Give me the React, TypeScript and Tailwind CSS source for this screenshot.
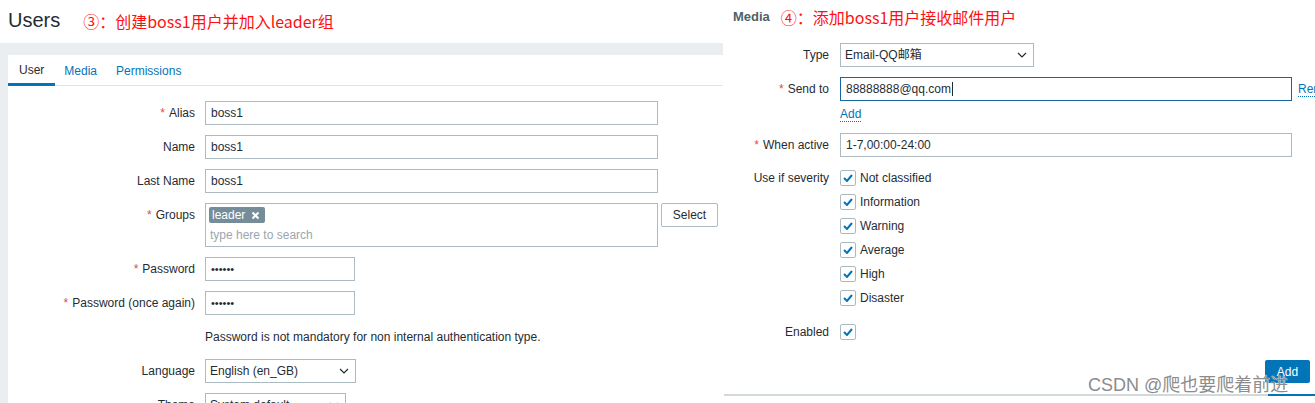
import React from "react";

const Chevron = () => (
  <svg width="10" height="6" viewBox="0 0 10 6" fill="none" className="shrink-0">
    <path d="M1 1l4 4 4-4" stroke="#1f2c33" strokeWidth="1.2" />
  </svg>
);

const Check = () => (
  <span className="w-[16px] h-[16px] border border-[#acbbc2] rounded-[2px] bg-white flex items-center justify-center shrink-0">
    <svg width="10" height="8" viewBox="0 0 10 8" fill="none">
      <path d="M1 4l3 3 5-6" stroke="#0275b8" strokeWidth="2" />
    </svg>
  </span>
);

const Req = () => <span className="text-[#d64e4e] mr-[4px]">*</span>;

function LRow({ label, req, children }: { label: string; req?: boolean; children: React.ReactNode }) {
  return (
    <div className="flex">
      <div className="w-[197px] text-right leading-[24px] pr-[10px] shrink-0">
        {req && <Req />}
        {label}
      </div>
      {children}
    </div>
  );
}

const Input = ({ value, w }: { value: string; w: string }) => (
  <div className={`${w} h-[24px] border border-[#acbbc2] pl-[5px] leading-[22px] bg-white`}>{value}</div>
);

export default function App() {
  const sev = ["Not classified", "Information", "Warning", "Average", "High", "Disaster"];
  return (
    <div className="relative flex w-[1315px] h-[403px] overflow-hidden bg-white text-[12px] text-[#1f2c33] font-['Liberation_Sans','Noto_Sans_CJK_SC',sans-serif]">
      {/* LEFT */}
      <div className="w-[723px] shrink-0 flex flex-col">
        <div className="h-[43px] flex items-center pl-[8px] shrink-0">
          <span className="text-[20px] leading-none pb-[4px]">Users</span>
          <span className="ml-[23px] text-[16px] text-[#ff1010] font-['Noto_Sans_CJK_SC',sans-serif] pb-[2px]">
            ③：创建boss1用户并加入leader组
          </span>
        </div>
        <div className="flex-1 bg-[#ebeef0] pl-[8px] pt-[12px]">
          <div className="bg-white h-full">
            <div className="flex h-[31px] border-b border-[#dfe4e7]">
              <div className="h-[31px] -mb-px px-[11px] flex items-center pt-[1px] border-b-[3px] border-[#0275b8]">User</div>
              <div className="h-[31px] px-[9px] flex items-center text-[#0275b8]">Media</div>
              <div className="h-[31px] px-[10px] flex items-center text-[#0275b8]">Permissions</div>
            </div>
            <div className="pt-[15px] flex flex-col gap-[10px]">
              <LRow label="Alias" req>
                <Input value="boss1" w="w-[453px]" />
              </LRow>
              <LRow label="Name">
                <Input value="boss1" w="w-[453px]" />
              </LRow>
              <LRow label="Last Name">
                <Input value="boss1" w="w-[453px]" />
              </LRow>
              <LRow label="Groups" req>
                <div className="w-[453px] h-[44px] border border-[#acbbc2] pl-[3px] pt-[2px]">
                  <span className="inline-flex items-center h-[16px] bg-[#768d99] text-white rounded-[2px] pl-[3px] pr-[5px] leading-[16px]">
                    leader
                    <svg width="9" height="9" viewBox="0 0 9 9" className="ml-[6px]">
                      <path d="M1.5 1.5l6 6M7.5 1.5l-6 6" stroke="#fff" strokeWidth="2" />
                    </svg>
                  </span>
                  <div className="text-[#9aa7ae] pl-[1px] mt-[4px] leading-[14px]">type here to search</div>
                </div>
                <div className="ml-[3px] w-[57px] h-[24px] border border-[#acbbc2] rounded-[2px] flex items-center justify-center">
                  Select
                </div>
              </LRow>
              <LRow label="Password" req>
                <div className="w-[150px] h-[24px] border border-[#acbbc2] pl-[5px] leading-[22px] text-[11px]">••••••</div>
              </LRow>
              <LRow label="Password (once again)" req>
                <div className="w-[150px] h-[24px] border border-[#acbbc2] pl-[5px] leading-[22px] text-[11px]">••••••</div>
              </LRow>
              <LRow label="">
                <div className="leading-[24px]">Password is not mandatory for non internal authentication type.</div>
              </LRow>
              <LRow label="Language">
                <div className="w-[151px] h-[24px] border border-[#acbbc2] pl-[4px] pr-[6px] flex items-center justify-between">
                  <span>English (en_GB)</span>
                  <Chevron />
                </div>
              </LRow>
              <LRow label="Theme">
                <div className="w-[141px] h-[24px] border border-[#acbbc2] pl-[4px] pr-[6px] flex items-center justify-between">
                  <span>System default</span>
                  <Chevron />
                </div>
              </LRow>
            </div>
          </div>
        </div>
      </div>

      {/* RIGHT */}
      <div className="flex-1 flex flex-col pl-[10px] overflow-hidden">
        <div className="h-[33px] flex items-center shrink-0">
          <span className="text-[13px] font-bold text-[#4f5f6b]">Media</span>
          <span className="ml-[11px] text-[16px] text-[#ff1010] font-['Noto_Sans_CJK_SC',sans-serif]">
            ④：添加boss1用户接收邮件用户
          </span>
        </div>
        <div className="mt-[10px] flex flex-col">
          <div className="flex">
            <div className="w-[96px] text-right leading-[24px] shrink-0">Type</div>
            <div className="ml-[11px] w-[194px] h-[24px] border border-[#acbbc2] pl-[4px] pr-[6px] flex items-center justify-between">
              <span>Email-QQ邮箱</span>
              <Chevron />
            </div>
          </div>
          <div className="flex mt-[10px]">
            <div className="w-[96px] text-right leading-[24px] shrink-0">
              <Req />
              Send to
            </div>
            <div className="ml-[11px] flex flex-col">
              <div className="flex items-center">
                <div className="w-[452px] h-[24px] border border-[#1566a3] pl-[5px] flex items-center shrink-0">
                  88888888@qq.com<span className="w-px h-[14px] bg-[#1f2c33] ml-[1px]" />
                </div>
                <span className="ml-[6px] text-[#0275b8] border-b border-dotted border-[#0275b8] leading-[14px] whitespace-nowrap">Remove</span>
              </div>
              <div className="mt-[4px] h-[18px]">
                <span className="text-[#0275b8] border-b border-dotted border-[#0275b8] leading-[14px] inline-block">Add</span>
              </div>
            </div>
          </div>
          <div className="flex mt-[10px]">
            <div className="w-[96px] text-right leading-[24px] shrink-0">
              <Req />
              When active
            </div>
            <div className="ml-[11px] w-[452px] h-[24px] border border-[#acbbc2] pl-[5px] leading-[22px] shrink-0">1-7,00:00-24:00</div>
          </div>
          <div className="flex mt-[9px]">
            <div className="w-[96px] text-right leading-[24px] shrink-0">Use if severity</div>
            <div className="ml-[11px] flex flex-col">
              {sev.map((s) => (
                <div key={s} className="h-[24px] flex items-center gap-[4px]">
                  <Check />
                  <span>{s}</span>
                </div>
              ))}
            </div>
          </div>
          <div className="flex mt-[10px]">
            <div className="w-[96px] text-right leading-[24px] shrink-0">Enabled</div>
            <div className="ml-[11px] h-[24px] flex items-center">
              <Check />
            </div>
          </div>
          <div className="flex justify-end pr-[5px] mt-[16px]">
            <div className="w-[45px] h-[23px] bg-[#0275b8] text-white rounded-[2px] flex items-center justify-center">Add</div>
          </div>
          <div className="flex mt-[11px] -ml-[9px]">
            <div className="flex-1 h-[2px] bg-[#d1d9dd]" />
            <div className="w-[47px] h-[2px] bg-[#0275b8]" />
          </div>
        </div>
      </div>

      <div className="absolute left-[1088px] top-[374px] text-[18px] leading-[22px] text-[#8c8c8c] font-['Liberation_Sans','Noto_Sans_CJK_SC',sans-serif] [text-shadow:0_0_1px_#fff,0_0_1px_#fff]">
        CSDN @爬也要爬着前进
      </div>
    </div>
  );
}
